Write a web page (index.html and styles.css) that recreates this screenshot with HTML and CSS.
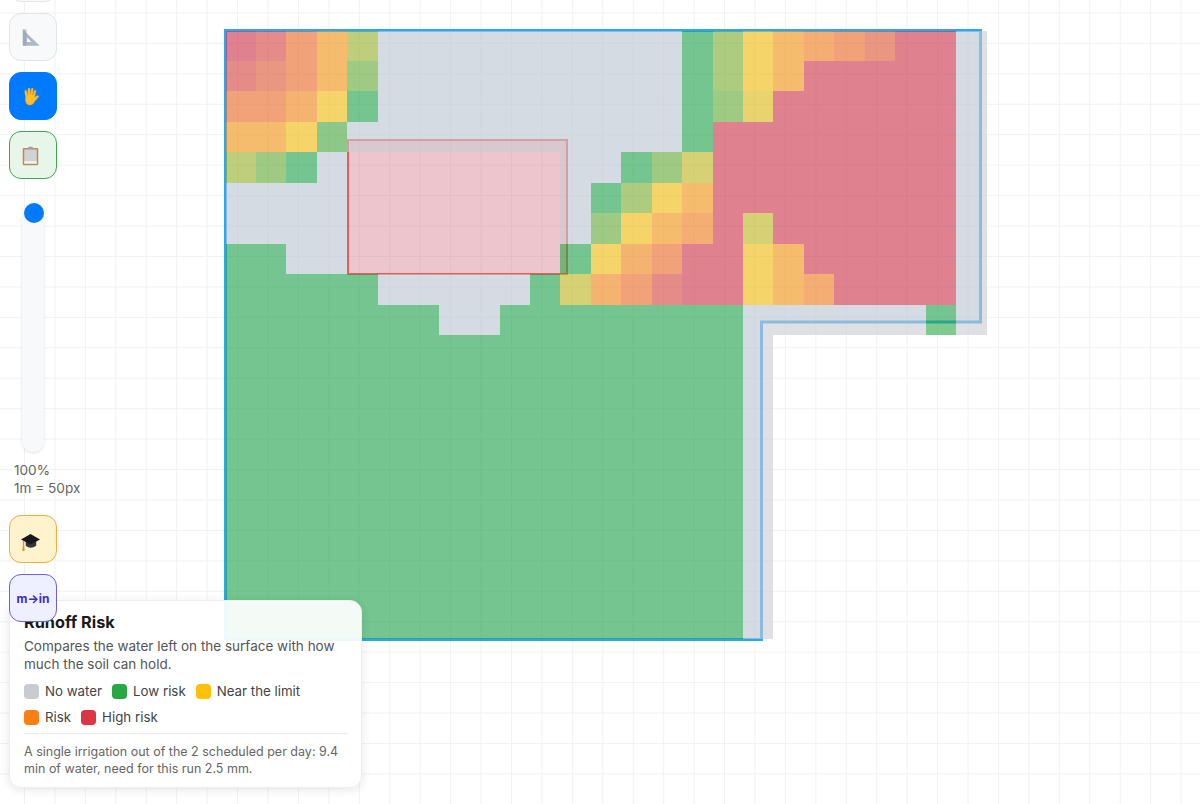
FILE: index.html
```html
<!DOCTYPE html>
<html lang="en">
<head>
  <meta charset="UTF-8">
  <title>Irrigation Planner - Runoff Risk</title>
  <link rel="stylesheet" href="styles.css">
</head>
<body>

  <!-- Garden outline sits under the translucent cells -->
  <svg class="outline" width="1200" height="804">
    <polygon points="225.5,30.5 980.5,30.5 980.5,322 761.5,322 761.5,639.5 225.5,639.5"></polygon>
  </svg>

  <div class="obstacle"></div>
  <div class="heatmap" id="heatmap"></div>

  <div class="toolbar">
    <button class="tool"></button>
    <button class="tool">
      <svg width="20" height="20" viewBox="0 0 22 22">
        <path d="M2 1.5 L20.5 19.5 H2 Z M6.5 10.5 V15.5 H11.5 Z" fill="#adb8c5" fill-rule="evenodd"></path>
        <path d="M2 1.5 V19.5 H6 V1.5 Z" fill="#93a1b2" opacity="0.6"></path>
      </svg>
    </button>
    <button class="tool tool-active">
      <svg width="18" height="20" viewBox="0 0 20 22">
        <path d="M4 11 L3 5 Q3 3.6 4 3.6 Q5.2 3.6 5.4 5 L6.4 9 L6.6 2.4 Q6.7 1 7.8 1 Q9 1 9 2.4 L9.3 8.6 L10.4 1.8 Q10.6 .8 11.6 1 Q12.7 1.2 12.5 2.4 L11.9 9 L13.6 4 Q14 3 15 3.4 Q15.9 3.8 15.6 5 L14 11.4 L16 10 Q17.4 9 18.4 9.8 Q19 10.6 18 11.4 L14.4 15.6 Q12 20 8.6 20 Q4.4 20 3.8 15 Z" fill="#fbbf2d" stroke="#e8960f" stroke-width="0.5"></path>
      </svg>
    </button>
    <button class="tool tool-green">
      <svg width="17" height="20" viewBox="0 0 18 21">
        <rect x="0.8" y="2" width="16.4" height="18.4" rx="1.2" fill="#b98a58"></rect>
        <rect x="2.4" y="3.6" width="13.2" height="15" fill="#d2d2d4"></rect>
        <rect x="2.4" y="16" width="13.2" height="2.6" fill="#f2f2f2"></rect>
        <rect x="6.5" y="0.6" width="5" height="2.6" rx="1" fill="#9da3aa"></rect>
      </svg>
    </button>

    <div class="zoom-slider"><span class="zoom-thumb"></span></div>
    <div class="zoom-label">100%<br>1m = 50px</div>

    <button class="tool tool-learn">
      <svg width="21" height="20" viewBox="0 0 22 21">
        <path d="M6 9 V14.5 Q11 18.5 17 14.5 V9 Z" fill="#33353a"></path>
        <path d="M11 2 L21 8 L11 13 L1 8 Z" fill="#17181b"></path>
        <path d="M3 9 L3 14 L2.4 20 H4.8 L4.4 14 L4.4 10 Z" fill="#c9962f"></path>
      </svg>
    </button>
    <button class="tool tool-units">m→in</button>
  </div>

  <div class="legend-card">
    <h3>Runoff Risk</h3>
    <p class="legend-desc">Compares the water left on the surface with how much the soil can hold.</p>
    <div class="legend-items">
      <span class="legend-item"><i class="swatch swatch-none"></i>No water</span>
      <span class="legend-item"><i class="swatch swatch-low"></i>Low risk</span>
      <span class="legend-item"><i class="swatch swatch-near"></i>Near the limit</span>
      <span class="legend-item"><i class="swatch swatch-risk"></i>Risk</span>
      <span class="legend-item"><i class="swatch swatch-high"></i>High risk</span>
    </div>
    <p class="legend-foot">A single irrigation out of the 2 scheduled per day: 9.4 min of water, need for this run 2.5 mm.</p>
  </div>

  <script src="script.js"></script>
</body>
</html>
```

FILE: styles.css
```css
* { box-sizing: border-box; }
html, body {
  height: 100%;
}
body {
  margin: 0;
  overflow: hidden;
  position: relative;
  font-family: Inter, 'Liberation Sans', sans-serif;
  background-color: #fff;
  background-image:
    linear-gradient(to right, #f1f1f3 1px, transparent 1px),
    linear-gradient(to bottom, #f1f1f3 1px, transparent 1px);
  background-size: 30.45px 30.45px;
  background-position: 24px 12.5px;
}

.outline {
  position: absolute;
  top: 0;
  left: 0;
}
.outline polygon {
  fill: rgba(0, 123, 255, 0.1);
  stroke: #2ba6f2;
  stroke-width: 3;
}

.heatmap {
  position: absolute;
  top: 30.6px;
  left: 225.6px;
  display: grid;
  grid-template-columns: repeat(25, 30.45px);
  grid-auto-rows: 30.45px;
}
.cell-a { background: rgba(200, 204, 208, 0.6); }
.cell-b { background: rgba(40, 167, 69, 0.6); }
.cell-1 { background: rgba(83, 171, 57, 0.6); }
.cell-2 { background: rgba(111, 175, 49, 0.6); }
.cell-3 { background: rgba(137, 179, 41, 0.6); }
.cell-4 { background: rgba(163, 182, 34, 0.6); }
.cell-5 { background: rgba(201, 186, 23, 0.6); }
.cell-6 { background: rgba(234, 190, 13, 0.6); }
.cell-y { background: rgba(255, 193, 7, 0.6); }
.cell-h { background: rgba(255, 152, 14, 0.6); }
.cell-i { background: rgba(254, 136, 18, 0.6); }
.cell-o { background: rgba(253, 126, 20, 0.6); }
.cell-p { background: rgba(248, 108, 32, 0.6); }
.cell-q { background: rgba(236, 90, 45, 0.6); }
.cell-s { background: rgba(228, 72, 57, 0.6); }
.cell-r { background: rgba(220, 53, 69, 0.6); }

.obstacle {
  position: absolute;
  top: 139px;
  left: 347px;
  width: 221px;
  height: 136px;
  background: rgba(255, 93, 88, 0.3);
  border: 2px solid rgba(232, 70, 70, 0.85);
}

.toolbar {
  position: absolute;
  top: -46px;
  left: 9px;
  z-index: 5;
  display: flex;
  flex-direction: column;
  align-items: flex-start;
  gap: 11px;
}
.tool {
  width: 48px;
  height: 48px;
  padding: 0;
  display: flex;
  align-items: center;
  justify-content: center;
  background: #f8f9fa;
  border: 1px solid #e2e4e8;
  border-radius: 12px;
  cursor: pointer;
}
.tool svg {
  margin: 2px 5px 0 0;
}
.tool-active {
  background: #007bff;
  border-color: #007bff;
}
.tool-green {
  background: #e8f5e9;
  border: 1.5px solid #3fa652;
}
.tool-learn {
  background: #fff3cd;
  border: 1.5px solid #f0ad3a;
  margin-top: 7px;
}
.tool-learn svg {
  margin-top: 5px;
}
.tool-units {
  background: #eef0ff;
  border: 1.5px solid #6a5fe0;
  color: #3d2dbf;
  font: 700 12px Inter, 'Liberation Sans', sans-serif;
}

.zoom-slider {
  position: relative;
  width: 22px;
  height: 242px;
  margin: 20px 0 0 13px;
  background: #f8f9fb;
  border-radius: 11px;
  box-shadow: 0 1px 3px rgba(0, 0, 0, 0.12);
}
.zoom-thumb {
  position: absolute;
  top: -7px;
  left: 2px;
  width: 20px;
  height: 20px;
  background: #007bff;
  border-radius: 50%;
}
.zoom-label {
  margin: -2px 0 0 5px;
  font-size: 13.6px;
  line-height: 18px;
  color: #666;
}

.legend-card {
  position: absolute;
  top: 600px;
  left: 9px;
  z-index: 4;
  width: 353px;
  height: 188px;
  padding: 12px 14px;
  background: rgba(255, 255, 255, 0.92);
  border: 1px solid #eceef0;
  border-radius: 12px;
  box-shadow: 0 2px 10px rgba(0, 0, 0, 0.1);
}
.legend-card h3 {
  margin: 0;
  font-size: 16.3px;
  line-height: 18px;
  font-weight: 700;
  color: #1a1a1a;
}
.legend-desc {
  margin: 6px 0 0;
  font-size: 13.5px;
  line-height: 18.2px;
  color: #555;
}
.legend-items {
  display: flex;
  flex-wrap: wrap;
  gap: 10.5px 10px;
  margin-top: 11px;
}
.legend-item {
  display: flex;
  align-items: center;
  gap: 6px;
  font-size: 13.3px;
  line-height: 15px;
  color: #444;
}
.swatch {
  width: 15px;
  height: 15px;
  border-radius: 4px;
}
.swatch-none { background: #c8ccd0; }
.swatch-low { background: #28a745; }
.swatch-near { background: #ffc107; }
.swatch-risk { background: #fd7e14; }
.swatch-high { background: #dc3545; }
.legend-foot {
  margin: 8.5px 0 0;
  padding-top: 9px;
  border-top: 1px solid #e8eaec;
  font-size: 12.5px;
  line-height: 17px;
  color: #666;
}
```

FILE: script.js
```js
// one string per row, one letter per cell, "." = no cell (obstacle or outside the garden)
const rows = [
  "rsph4aaaaaaaaaab3yhopqrra",
  "sqph2aaaaaaaaaab3yhrrrrra",
  "ppiybaaaaaaaaaab26rrrrrra",
  "hhy1aaaaaaaaaaabrrrrrrrra",
  "42ba.......aab25rrrrrrrra",
  "aaaa.......ab3yhrrrrrrrra",
  "aaaa.......a2yhor5rrrrrra",
  "bbaa.......byiprryhrrrrra",
  "bbbbbaaaaab5ipsrryhorrrra",
  "bbbbbbbaabbbbbbbbaaaaaaba"
];
for (let i = 0; i < 10; i++) {
  rows.push("bbbbbbbbbbbbbbbbba.......");
}

const heatmap = document.getElementById("heatmap");
rows.forEach((row) => {
  for (const letter of row) {
    const div = document.createElement("div");
    if (letter !== ".") div.className = "cell-" + letter;
    heatmap.appendChild(div);
  }
});
```
